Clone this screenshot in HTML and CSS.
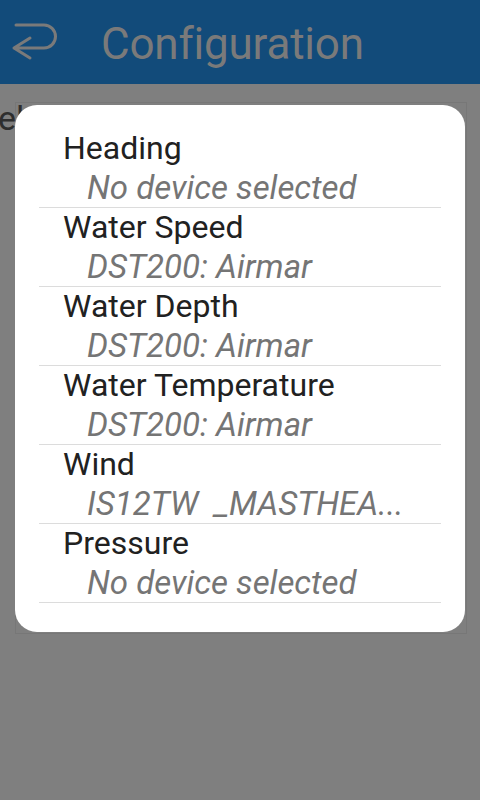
FILE: index.html
```html
<!DOCTYPE html>
<html lang="en">
<head>
  <meta charset="UTF-8">
  <meta name="viewport" content="width=device-width, initial-scale=1.0">
  <title>Configuration</title>
  <link rel="stylesheet" href="styles.css">
</head>
<body>
  <!-- App bar (dimmed by the dialog scrim) -->
  <header class="appbar">
    <svg class="back" width="60" height="44" viewBox="0 0 60 44">
      <path d="M16 5 H44 A11.5 11.5 0 0 1 44 28 H14 M30 18 L14 28 L30 38" fill="none" stroke="#7a7a7a" stroke-width="3" stroke-linecap="round" stroke-linejoin="round"/>
    </svg>
    <h1>Configuration</h1>
  </header>

  <main class="screen">
    <span class="behind">el</span>
    <div class="frame"></div>

    <div class="dialog">
      <ul class="sources">
        <li>
          <div class="name">Heading</div>
          <div class="device">No device selected</div>
        </li>
        <li>
          <div class="name">Water Speed</div>
          <div class="device">DST200: Airmar</div>
        </li>
        <li>
          <div class="name">Water Depth</div>
          <div class="device">DST200: Airmar</div>
        </li>
        <li>
          <div class="name">Water Temperature</div>
          <div class="device">DST200: Airmar</div>
        </li>
        <li>
          <div class="name">Wind</div>
          <div class="device">IS12TW&nbsp; _MASTHEA...</div>
        </li>
        <li>
          <div class="name">Pressure</div>
          <div class="device">No device selected</div>
        </li>
      </ul>
    </div>
  </main>
</body>
</html>
```

FILE: styles.css
```css
body {
  margin: 0;
  font-family: Roboto, 'Noto Sans', sans-serif;
  background-color: #7f7f7f; /* scrim over the page */
  height: 800px;
  overflow: hidden;
}
.appbar {
  height: 84px;
  background-color: #124b7a;
  display: flex;
  align-items: flex-start;
}
.back {
  margin-top: 20px;
  flex: none;
}
.appbar h1 {
  margin: 16px 0 0 41px;
  font-size: 44px;
  line-height: 56px;
  font-weight: 400;
  color: #7a7a7a;
  letter-spacing: -0.2px;
}
.screen {
  position: relative;
  height: 716px;
}
.behind {
  position: absolute;
  left: -2px;
  top: 14px;
  font-size: 34px;
  line-height: 40px;
  color: #2e2e2e;
}
.frame {
  position: absolute;
  left: 15px;
  top: 18px;
  width: 450px;
  height: 530px;
  border: 1px solid #777;
}
.dialog {
  position: absolute;
  left: 15px;
  top: 21px;
  width: 450px;
  height: 527px;
  background-color: #fff;
  border-radius: 22px;
}
.sources {
  list-style: none;
  margin: 0;
  padding: 24px 24px 0;
}
.sources li {
  border-bottom: 1px solid #dcdcdc;
  height: 78px;
}
.name {
  padding-left: 24px;
  font-size: 32px;
  line-height: 39px;
  color: #212121;
}
.device {
  padding-left: 48px;
  font-size: 33px;
  line-height: 39px;
  font-style: italic;
  color: #757575;
  white-space: nowrap;
}
```
